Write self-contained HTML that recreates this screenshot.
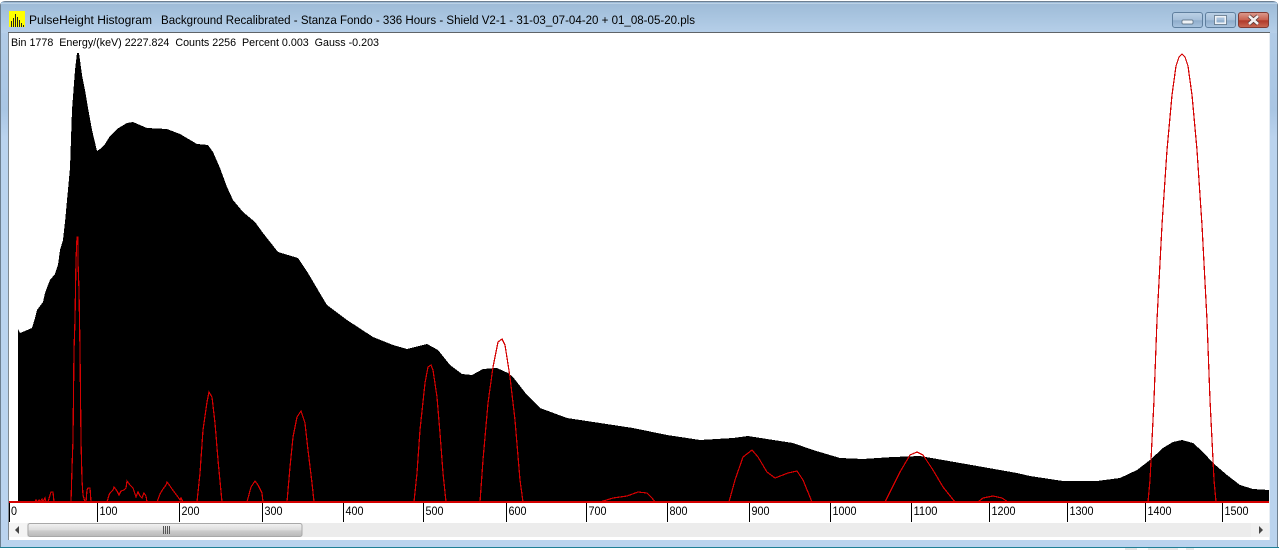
<!DOCTYPE html>
<html><head><meta charset="utf-8"><title>PulseHeight Histogram</title>
<style>html,body{margin:0;padding:0;width:1279px;height:551px;overflow:hidden;background:#fff}svg{display:block}text{font-family:"Liberation Sans",sans-serif;white-space:pre}</style></head>
<body>
<svg width="1279" height="551" viewBox="0 0 1279 551" xmlns="http://www.w3.org/2000/svg">
<defs>
<linearGradient id="tb" x1="0" y1="0" x2="0" y2="1"><stop offset="0" stop-color="#9dbad6"/><stop offset=".5" stop-color="#a9c5e0"/><stop offset="1" stop-color="#b6cfe9"/></linearGradient>
<linearGradient id="side" x1="0" y1="0" x2="0" y2="1"><stop offset="0" stop-color="#b4cde8"/><stop offset=".2" stop-color="#a9c6e4"/><stop offset=".25" stop-color="#bad3ee"/><stop offset="1" stop-color="#bad3ee"/></linearGradient>
<linearGradient id="btn" x1="0" y1="0" x2="0" y2="1"><stop offset="0" stop-color="#bcd1e6"/><stop offset=".5" stop-color="#a5bfd9"/><stop offset=".55" stop-color="#8fadcc"/><stop offset="1" stop-color="#a9c4df"/></linearGradient>
<linearGradient id="cls" x1="0" y1="0" x2="0" y2="1"><stop offset="0" stop-color="#dc9c90"/><stop offset=".5" stop-color="#c8604f"/><stop offset=".55" stop-color="#b03a2a"/><stop offset="1" stop-color="#c96a55"/></linearGradient>
<linearGradient id="th" x1="0" y1="0" x2="0" y2="1"><stop offset="0" stop-color="#f2f2f2"/><stop offset=".5" stop-color="#dcdcdc"/><stop offset=".55" stop-color="#cdcdcd"/><stop offset="1" stop-color="#b8b8b8"/></linearGradient>
</defs>

<rect width="1279" height="551" fill="#fff"/>
<path d="M0 547V6Q0 1 6 1H1272Q1278 1 1278 6V547Z" fill="url(#side)"/>
<path d="M0.5 547V6Q0.5 1.5 6 1.5H1272Q1277.5 1.5 1277.5 6V547" fill="none" stroke="#6d7f90" stroke-width="1"/>
<rect x="1" y="2" width="1276" height="31" fill="url(#tb)"/>
<rect x="0" y="547" width="1279" height="1" fill="#1f7f96"/>
<rect x="1" y="3" width="1276" height="1" fill="#c8daeb" opacity=".7"/>

<rect x="9" y="11" width="16" height="16" fill="#ffff00"/>
<path d="M11 27V21h1v6zM13 27V18h1v9zM15 27V14h1v13zM17 27V17h1v10zM19 27V20h1v7zM21 27V23h1v4zM23 27V25h1v2z" fill="#222"/>
<text x="29" y="24" font-size="12.3" fill="#000" textLength="123" lengthAdjust="spacingAndGlyphs">PulseHeight Histogram</text>
<text x="161" y="24" font-size="12.3" fill="#000" textLength="534" lengthAdjust="spacingAndGlyphs">Background Recalibrated - Stanza Fondo - 336 Hours - Shield V2-1 - 31-03_07-04-20 + 01_08-05-20.pls</text>

<rect x="1172.5" y="12.5" width="30" height="15" rx="2.5" fill="url(#btn)" stroke="#5f7f9e"/>
<rect x="1182" y="20" width="11" height="4" rx="1" fill="#eef2f6" stroke="#4f6478" stroke-width=".7"/>
<rect x="1205.5" y="12.5" width="30" height="15" rx="2.5" fill="url(#btn)" stroke="#5f7f9e"/>
<rect x="1215.5" y="16.5" width="10" height="7" fill="none" stroke="#eef2f6" stroke-width="2"/><rect x="1214.5" y="15.5" width="12" height="9" fill="none" stroke="#4f6478" stroke-width=".7"/>
<rect x="1238.5" y="12.5" width="30" height="15" rx="2.5" fill="url(#cls)" stroke="#7f3a33"/>
<path d="M1249 16L1258 24M1258 16L1249 24" stroke="#4a3030" stroke-width="4"/><path d="M1249 16L1258 24M1258 16L1249 24" stroke="#f4f0f0" stroke-width="2.6"/>

<rect x="8" y="33" width="1" height="507" fill="#7f8890"/>
<rect x="8" y="32" width="1262" height="1" fill="#5f6468"/>
<rect x="9" y="33" width="1260" height="507" fill="#fff"/>
<rect x="1269" y="33" width="1" height="507" fill="#e8eef4"/>
<text x="11" y="46" font-size="11.4" fill="#000" textLength="368" lengthAdjust="spacingAndGlyphs" xml:space="preserve">Bin 1778  Energy/(keV) 2227.824  Counts 2256  Percent 0.003  Gauss -0.203</text>

<polygon fill="#000" shape-rendering="crispEdges" points="18,502 18,329 20,333 25,331 32,328 35,318 37,310 40,306 43,302 45,293 48,285 50,280 55,274 58,265 60,250 63,240 65,222 70,168 72,110 75,70 77,53 79,53 82,75 85,90 88,108 92,130 97,151 100,149 105,144 110,136 117,129 127,123 133,122 147,128 167,129 180,134 197,144 208,145 213,152 220,168 227,187 233,200 243,212 255,222 263,233 278,252 298,258 308,273 318,290 327,305 347,320 373,337 393,345 407,349 427,344 438,350 450,365 462,374 472,375 483,369 497,368 508,373 513,377 527,395 540,408 567,418 600,423 633,428 667,435 687,438 700,440 733,438 748,436 767,439 793,443 813,450 840,458 863,459 893,457 920,456 943,460 983,467 1017,473 1030,476 1063,481 1097,481 1120,478 1137,470 1150,460 1163,448 1173,442 1182,440 1193,443 1203,452 1213,463 1227,475 1240,485 1253,489 1269,490 1269,502"/>

<polyline fill="none" stroke="#d40000" stroke-width="1.2" shape-rendering="crispEdges" points="9,502 35,502 36,500 37,502 39,500 40,502 42,499 43,502 45,498 46,502 48,502 50,495 51,492 53,492 54,502 71,502 72,468 73,440 74,350 75,320 76,260 77,237 78,237 78,262 79,290 80,350 81,440 82,480 83,495 85,502 86,502 87,490 88,488 90,488 91,502 107,502 109,495 110,493 113,490 114,487 117,491 119,495 121,491 124,490 126,488 127,481 130,485 133,488 135,494 136,497 138,492 140,496 142,498 144,493 146,496 147,502 157,502 160,494 163,489 166,485 167,482 170,486 172,489 175,493 178,497 180,500 181,498 183,502 196,502 197,502 200,473 203,430 207,402 209,392 212,397 215,423 218,460 222,502 247,502 251,487 255,481 258,485 262,493 263,502 287,502 290,467 293,437 297,417 301,411 305,423 308,450 312,483 314,502 414,502 417,473 420,430 425,383 428,367 431,365 433,370 437,397 440,433 443,473 446,502 480,502 483,460 488,403 493,367 498,342 502,339 505,345 510,377 515,420 520,480 523,502 600,502 613,498 627,496 638,492 647,493 652,498 655,502 729,502 735,480 743,457 752,450 758,457 767,472 775,478 788,473 797,471 803,480 812,502 885,502 900,472 910,455 917,452 923,455 933,470 943,487 955,502 978,502 983,498 993,496 1002,498 1008,502 1148,502 1150,480 1152,440 1154,400 1157,320 1162,225 1167,150 1172,95 1176,66 1179,57 1182,54 1185,57 1188,66 1192,95 1197,150 1202,225 1207,320 1210,400 1212,440 1214,480 1216,502 1269,502"/>
<rect x="9" y="501" width="1260" height="2" fill="#d40000"/>

<g fill="#000">
<rect x="9" y="503" width="1" height="19"/><rect x="97" y="503" width="1" height="19"/><rect x="179" y="503" width="1" height="19"/><rect x="262" y="503" width="1" height="19"/><rect x="343" y="503" width="1" height="19"/><rect x="423" y="503" width="1" height="19"/><rect x="506" y="503" width="1" height="19"/><rect x="586" y="503" width="1" height="19"/><rect x="667" y="503" width="1" height="19"/><rect x="749" y="503" width="1" height="19"/><rect x="830" y="503" width="1" height="19"/><rect x="911" y="503" width="1" height="19"/><rect x="989" y="503" width="1" height="19"/><rect x="1067" y="503" width="1" height="19"/><rect x="1145" y="503" width="1" height="19"/><rect x="1222" y="503" width="1" height="19"/>
</g>
<g font-size="12" fill="#000" lengthAdjust="spacingAndGlyphs">
<text x="11" y="515" textLength="6" lengthAdjust="spacingAndGlyphs">0</text><text x="99.5" y="515" textLength="18" lengthAdjust="spacingAndGlyphs">100</text><text x="181.5" y="515" textLength="18" lengthAdjust="spacingAndGlyphs">200</text><text x="264.5" y="515" textLength="18" lengthAdjust="spacingAndGlyphs">300</text><text x="345.5" y="515" textLength="18" lengthAdjust="spacingAndGlyphs">400</text><text x="425.5" y="515" textLength="18" lengthAdjust="spacingAndGlyphs">500</text><text x="508.5" y="515" textLength="18" lengthAdjust="spacingAndGlyphs">600</text><text x="588.5" y="515" textLength="18" lengthAdjust="spacingAndGlyphs">700</text><text x="669.5" y="515" textLength="18" lengthAdjust="spacingAndGlyphs">800</text><text x="751.5" y="515" textLength="18" lengthAdjust="spacingAndGlyphs">900</text><text x="832.5" y="515" textLength="24" lengthAdjust="spacingAndGlyphs">1000</text><text x="913.5" y="515" textLength="24" lengthAdjust="spacingAndGlyphs">1100</text><text x="991.5" y="515" textLength="24" lengthAdjust="spacingAndGlyphs">1200</text><text x="1069.5" y="515" textLength="24" lengthAdjust="spacingAndGlyphs">1300</text><text x="1147.5" y="515" textLength="24" lengthAdjust="spacingAndGlyphs">1400</text><text x="1224.5" y="515" textLength="24" lengthAdjust="spacingAndGlyphs">1500</text>
</g>

<rect x="9" y="522" width="1260" height="18" fill="#fff"/>
<rect x="9" y="523" width="1260" height="14" fill="#ececec"/>
<rect x="9" y="523" width="18" height="14" fill="#f4f4f4"/>
<path d="M19 526V534L15 530Z" fill="#444"/>
<rect x="28" y="523.5" width="274" height="13" rx="2" fill="url(#th)" stroke="#a8a8a8"/>
<path d="M163.5 526v8M165.5 526v8M167.5 526v8M169.5 526v8" stroke="#555" stroke-width="1"/>
<rect x="1251" y="523" width="18" height="14" fill="#f0f0f0"/>
<path d="M1259 526V534L1263 530Z" fill="#444"/>

<rect x="1125" y="548" width="12" height="2" fill="#e4e4e4"/><rect x="1148" y="548" width="30" height="2" fill="#e8e8e8"/><rect x="1186" y="548" width="8" height="2" fill="#e8e8e8"/>
</svg>
</body></html>
